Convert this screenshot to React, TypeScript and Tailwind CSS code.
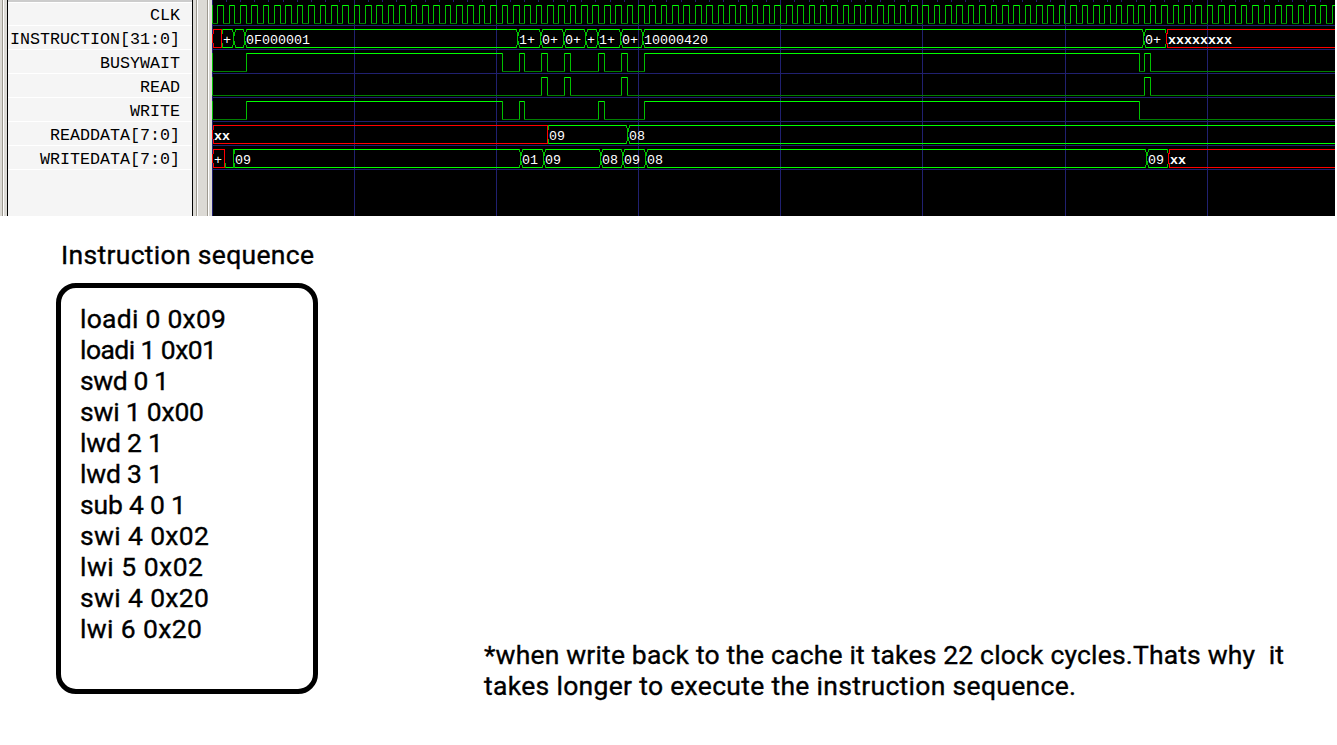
import { Fragment, useLayoutEffect, useRef, useState } from "react";

const LEFT = 212;
const RIGHT = 1335;
const HEIGHT = 216;
const ROW = 24;
const SWING = 18;

const GRID = "#202070";
const HIGH = "#00ff00";
const LOW = "#008000";
const EDGE = "#00c000";
const UNKNOWN = "#ff0000";

const signals = [
  "CLK",
  "INSTRUCTION[31:0]",
  "BUSYWAIT",
  "READ",
  "WRITE",
  "READDATA[7:0]",
  "WRITEDATA[7:0]",
];

type Segment = { from: number; label: string; kind?: "x" | "low" };

const instruction: Segment[] = [
  { from: 212, label: "", kind: "x" },
  { from: 221, label: "+" },
  { from: 233, label: "" },
  { from: 244, label: "0F000001" },
  { from: 517, label: "1+" },
  { from: 540, label: "0+" },
  { from: 563, label: "0+" },
  { from: 585, label: "+" },
  { from: 597, label: "1+" },
  { from: 620, label: "0+" },
  { from: 642, label: "10000420" },
  { from: 1143, label: "0+" },
  { from: 1166, label: "xxxxxxxx", kind: "x" },
];

const readData: Segment[] = [
  { from: 212, label: "xx", kind: "x" },
  { from: 547, label: "09" },
  { from: 627, label: "08" },
];

const writeData: Segment[] = [
  { from: 212, label: "+", kind: "x" },
  { from: 224, label: "", kind: "low" },
  { from: 233, label: "09" },
  { from: 520, label: "01" },
  { from: 543, label: "09" },
  { from: 600, label: "08" },
  { from: 622, label: "09" },
  { from: 645, label: "08" },
  { from: 1146, label: "09" },
  { from: 1168, label: "xx", kind: "x" },
];

const busywait = [246, 502, 519, 524, 541, 547, 564, 570, 598, 604, 621, 627, 644, 1139, 1144, 1150];
const read = [541, 547, 564, 570, 621, 627, 1144, 1150];
const write = [246, 502, 519, 524, 598, 604, 644, 1139];
const clock = Array.from({ length: 197 }, (_, i) => LEFT + Math.floor((i + 1) * 5.6865));

function Bit({ row, toggles }: { row: number; toggles: number[] }) {
  const top = 5 + row * ROW;
  const points = [LEFT, ...toggles];
  return (
    <g>
      {points.map((x, i) => {
        const high = i % 2 === 1;
        const end = points[i + 1] ?? RIGHT;
        return (
          <Fragment key={x}>
            <rect x={x} y={high ? top : top + SWING} width={end - x + 1} height={1} fill={high ? HIGH : LOW} />
            <rect x={x} y={top} width={1} height={SWING} fill={EDGE} />
          </Fragment>
        );
      })}
    </g>
  );
}

/** Two walls that lean towards each other and meet halfway down. */
function Crossing({ x, top }: { x: number; top: number }) {
  return (
    <g fill={EDGE}>
      <rect x={x - 1} y={top} width={1} height={3} />
      <rect x={x + 2} y={top} width={1} height={3} />
      <rect x={x} y={top + 3} width={1} height={13} />
      <rect x={x + 1} y={top + 3} width={1} height={4} />
      <rect x={x + 1} y={top + 12} width={1} height={4} />
      <rect x={x - 1} y={top + 16} width={1} height={3} />
      <rect x={x + 2} y={top + 16} width={1} height={3} />
    </g>
  );
}

function Bus({ row, segments }: { row: number; segments: Segment[] }) {
  const top = 5 + row * ROW;
  return (
    <g>
      {segments.map((s, i) => {
        const unknown = s.kind === "x";
        const color = unknown ? UNKNOWN : HIGH;
        const edge = unknown ? UNKNOWN : EDGE;
        const prev = segments[i - 1];
        const next = segments[i + 1];
        const mixed = prev !== undefined && prev.kind !== s.kind;
        const start = s.from + (!prev || mixed ? 1 : 2);
        const end = next ? next.from - (next.kind !== s.kind ? 0 : 1) : RIGHT;
        return (
          <g key={s.from}>
            {s.kind !== "low" && <rect x={start} y={top} width={end - start} height={1} fill={color} />}
            <rect x={start} y={top + SWING} width={end - start} height={1} fill={color} />
            {!prev && (
              <g fill={UNKNOWN}>
                <rect x={212} y={top + 5} width={1} height={9} />
                <rect x={213} y={top} width={1} height={5} />
                <rect x={213} y={top + 14} width={1} height={5} />
              </g>
            )}
            {prev && !mixed && <Crossing x={s.from} top={top} />}
            {mixed && (
              <>
                <rect
                  x={s.from}
                  y={unknown ? top + 4 : top}
                  width={1}
                  height={unknown ? 11 : 19}
                  fill={prev.kind === "low" ? EDGE : UNKNOWN}
                />
                {s.kind !== "low" && <rect x={s.from + 1} y={top} width={1} height={5} fill={edge} />}
                <rect x={s.from + 1} y={top + 14} width={1} height={5} fill={edge} />
                {unknown && <rect x={s.from - 1} y={top} width={1} height={4} fill={EDGE} />}
                {unknown && <rect x={s.from - 1} y={top + 15} width={1} height={4} fill={EDGE} />}
              </>
            )}
            {s.label && (
              <text
                x={s.from + 2}
                y={top + 15}
                fill="#ffffff"
                className={
                  unknown && s.label !== "+"
                    ? "font-['Liberation_Mono',monospace] text-[13.33px] font-bold"
                    : "font-['Liberation_Mono',monospace] text-[13.33px]"
                }
              >
                {s.label}
              </text>
            )}
          </g>
        );
      })}
    </g>
  );
}

function Waves() {
  return (
    <svg
      width={RIGHT - LEFT}
      height={HEIGHT}
      viewBox={`${LEFT} 0 ${RIGHT - LEFT} ${HEIGHT}`}
      shapeRendering="crispEdges"
      className="block shrink-0 bg-black"
    >
      {Array.from({ length: 8 }, (_, i) => (
        <rect key={i} x={LEFT + Math.floor(i * 142.17)} y={0} width={1} height={HEIGHT} fill={GRID} />
      ))}
      {Array.from({ length: 78 }, (_, i) => (
        <rect key={i} x={LEFT + Math.floor((i + 1) * 14.217)} y={0} width={1} height={2} fill={GRID} />
      ))}
      {signals.map((s, i) => (
        <rect key={s} x={LEFT} y={25 + i * ROW} width={RIGHT - LEFT} height={1} fill={GRID} />
      ))}
      <Bit row={0} toggles={clock} />
      <Bus row={1} segments={instruction} />
      <Bit row={2} toggles={busywait} />
      <Bit row={3} toggles={read} />
      <Bit row={4} toggles={write} />
      <Bus row={5} segments={readData} />
      <Bus row={6} segments={writeData} />
    </svg>
  );
}

function SignalNames() {
  return (
    <div className="flex h-full w-[212px] shrink-0 bg-[#dcdad5]">
      <div className="ml-[2px] w-px bg-[#9e9a91]" />
      <div className="w-px bg-white" />
      <div className="ml-[3px] w-px bg-black" />
      <div className="flex w-[184px] flex-col bg-[#f5f5f5]">
        <div className="h-[2px] shrink-0 bg-[#cccccc]" />
        <div className="h-px shrink-0 bg-white" />
        {signals.map((s, i) => (
          <div
            key={s}
            className={
              (i === 0 ? "h-[23px]" : "h-6") +
              " flex shrink-0 items-end justify-end border-b border-white pr-3 font-['Liberation_Mono',monospace] text-[16.67px] leading-[18px] text-black"
            }
          >
            {s}
          </div>
        ))}
      </div>
      <div className="w-px bg-black" />
      <div className="ml-[3px] w-px bg-[#9e9a91]" />
      <div className="w-px bg-white" />
      <div className="ml-[9px] w-px bg-[#9e9a91]" />
      <div className="w-px bg-white" />
    </div>
  );
}

/** A single line whose tracking is adjusted so that it fills the given width. */
function Line({ text, width }: { text: string; width: number }) {
  const ref = useRef<HTMLSpanElement>(null);
  const [spacing, setSpacing] = useState(0);
  useLayoutEffect(() => {
    if (ref.current) {
      ref.current.style.letterSpacing = "0px";
      const natural = ref.current.getBoundingClientRect().width;
      const fitted = (width - natural) / (text.length - 1);
      ref.current.style.letterSpacing = `${fitted}px`;
      setSpacing(fitted);
    }
  }, [text, width]);
  return (
    <div className="h-[31px] whitespace-pre leading-[31px]">
      <span ref={ref} style={{ letterSpacing: `${spacing}px` }}>
        {text}
      </span>
    </div>
  );
}

const program: [string, number][] = [
  ["loadi 0 0x09", 146],
  ["loadi 1 0x01", 137],
  ["swd 0 1", 89],
  ["swi 1 0x00", 124],
  ["lwd 2 1", 83],
  ["lwd 3 1", 83],
  ["sub 4 0 1", 106],
  ["swi 4 0x02", 129],
  ["lwi 5 0x02", 123],
  ["swi 4 0x20", 129],
  ["lwi 6 0x20", 122],
];

export default function App() {
  return (
    <div className="flex h-[745px] w-[1337px] flex-col overflow-hidden bg-white text-black">
      <div className="flex h-[216px] shrink-0">
        <SignalNames />
        <Waves />
      </div>
      <div className="flex items-start font-['Roboto',sans-serif] text-[26.5px] font-normal [-webkit-text-stroke:0.35px_#000]">
        <div className="ml-[56px] w-[262px] pt-[23px]">
          <div className="pl-[5px]">
            <Line text="Instruction sequence" width={253} />
          </div>
          <div className="mt-[13px] h-[411px] rounded-[20px] border-[5px] border-black pl-[19px] pt-[15px]">
            {program.map(([text, width]) => (
              <Line key={text} text={text} width={width} />
            ))}
          </div>
        </div>
        <div className="ml-[166px] pt-[423px]">
          <Line text="*when write back to the cache it takes 22 clock cycles.Thats why  it" width={800} />
          <Line text="takes longer to execute the instruction sequence." width={592} />
        </div>
      </div>
    </div>
  );
}
